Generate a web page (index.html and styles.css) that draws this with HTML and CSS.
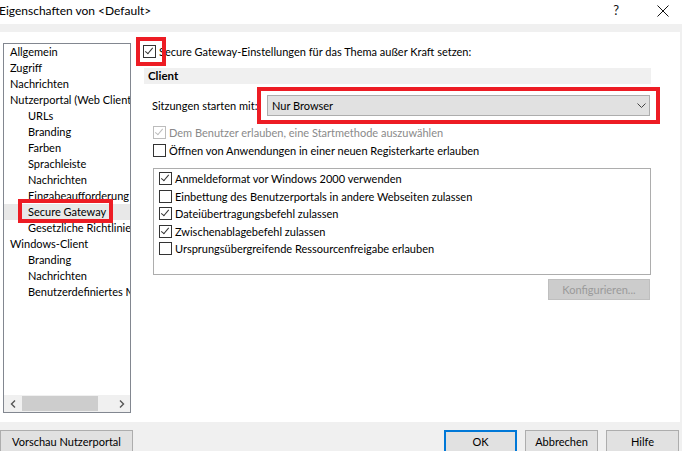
FILE: index.html
```html
<!DOCTYPE html>
<html lang="de">

<head>
    <meta charset="UTF-8" />
    <meta name="viewport" content="width=device-width, initial-scale=1.0" />
    <title>Eigenschaften von &lt;Default&gt;</title>

    <link rel="stylesheet" href="styles.css">
</head>

<body>
    <div class="titlebar">
        <span class="title">Eigenschaften von &lt;Default&gt;</span>
        <span class="tb-help">?</span>
        <svg class="tb-close" width="12" height="12" viewBox="0 0 12 12">
            <path d="M0.5 0.5 L11.5 11.5 M11.5 0.5 L0.5 11.5" stroke="#111" stroke-width="1" fill="none" />
        </svg>
    </div>

    <div class="window">
        <!-- Baum links -->
        <div class="tree">
            <ul>
                <li>Allgemein</li>
                <li>Zugriff</li>
                <li>Nachrichten</li>
                <li>Nutzerportal (Web Client)</li>
                <li class="sub">URLs</li>
                <li class="sub">Branding</li>
                <li class="sub">Farben</li>
                <li class="sub">Sprachleiste</li>
                <li class="sub">Nachrichten</li>
                <li class="sub">Eingabeaufforderung</li>
                <li class="sub selected">Secure Gateway<span class="mark mark-tree"></span></li>
                <li class="sub">Gesetzliche Richtlinien</li>
                <li>Windows-Client</li>
                <li class="sub">Branding</li>
                <li class="sub">Nachrichten</li>
                <li class="sub">Benutzerdefiniertes Menü</li>
            </ul>
            <div class="hscroll">
                <span class="arrow">
                    <svg width="6" height="8" viewBox="0 0 6 8"><polyline points="5,0.5 1.5,4 5,7.5" stroke="#555" stroke-width="1.4" fill="none" /></svg>
                </span>
                <span class="thumb"></span>
                <span class="arrow arrow-right">
                    <svg width="6" height="8" viewBox="0 0 6 8"><polyline points="1,0.5 4.5,4 1,7.5" stroke="#555" stroke-width="1.4" fill="none" /></svg>
                </span>
            </div>
        </div>

        <!-- Einstellungen rechts -->
        <div class="settings">
            <label class="check-row main-row">
                <span class="cb checked"><span class="mark mark-cb"></span></span>
                <span>Secure Gateway-Einstellungen für das Thema außer Kraft setzen:</span>
            </label>

            <div class="section-head">Client</div>

            <div class="select-row">
                <span class="select-label">Sitzungen starten mit:</span>
                <div class="select">
                    <span>Nur Browser</span>
                    <svg width="9" height="5" viewBox="0 0 9 5"><polyline points="0.5,0.5 4.5,4.5 8.5,0.5" stroke="#444" stroke-width="1" fill="none" /></svg>
                    <span class="mark mark-select"></span>
                </div>
            </div>

            <label class="check-row indent disabled">
                <span class="cb checked"></span>
                <span>Dem Benutzer erlauben, eine Startmethode auszuwählen</span>
            </label>
            <label class="check-row indent">
                <span class="cb"></span>
                <span>Öffnen von Anwendungen in einer neuen Registerkarte erlauben</span>
            </label>

            <div class="group">
                <label class="check-row"><span class="cb checked"></span><span>Anmeldeformat vor Windows 2000 verwenden</span></label>
                <label class="check-row"><span class="cb"></span><span>Einbettung des Benutzerportals in andere Webseiten zulassen</span></label>
                <label class="check-row"><span class="cb checked"></span><span>Dateiübertragungsbefehl zulassen</span></label>
                <label class="check-row"><span class="cb checked"></span><span>Zwischenablagebefehl zulassen</span></label>
                <label class="check-row"><span class="cb"></span><span>Ursprungsübergreifende Ressourcenfreigabe erlauben</span></label>
            </div>

            <button class="btn btn-config" disabled>Konfigurieren...</button>
        </div>
    </div>

    <footer>
        <button class="btn btn-preview">Vorschau Nutzerportal</button>
        <div class="footer-right">
            <button class="btn btn-ok">OK</button>
            <button class="btn">Abbrechen</button>
            <button class="btn">Hilfe</button>
        </div>
    </footer>
</body>

</html>
```

FILE: styles.css
```css
:root {
    --bg-gray: #f0f0f0;
    --border: #adadad;
    --border-tree: #828790;
    --btn-bg: #e1e1e1;
    --text: #000000;
    --text-disabled: #8a8a8a;
    --mark: #ed1c24;
    --blue: #0078d7;
}

body {
    margin: 0;
    width: 682px;
    height: 451px;
    overflow: hidden;
    background-color: var(--bg-gray);
    color: var(--text);
    font-family: Lato, "Noto Sans", sans-serif;
    font-size: 11px;
}

.titlebar {
    height: 24px;
    background-color: #ffffff;
    display: flex;
    align-items: center;
    font-size: 12px;

    .title {
        margin-left: -1px;
        margin-top: -4px;
    }

    .tb-help {
        margin-left: auto;
        margin-top: -4px;
        font-size: 13px;
        color: #111;
    }

    .tb-close {
        margin: -3px 13px 0 38px;
    }
}

.window {
    height: 390px;
    margin-top: 8px;
    margin-right: 2px;
    background-color: #ffffff;
    display: flex;
    align-items: flex-start;
}

/* Baum */
.tree {
    box-sizing: border-box;
    width: 128px;
    height: 370px;
    margin: 11px 0 0 3px;
    border: 1px solid var(--border-tree);
    display: flex;
    flex-direction: column;

    ul {
        list-style: none;
        margin: 0;
        padding: 0;
        flex: 1;
        overflow: hidden;
    }

    li {
        position: relative;
        height: 16px;
        line-height: 16px;
        padding-left: 6px;
        white-space: nowrap;
    }

    li.sub {
        padding-left: 24px;
    }

    li.selected {
        background-color: #e8e8e8;
    }
}

.hscroll {
    height: 17px;
    background-color: var(--bg-gray);
    display: flex;
    align-items: center;

    .arrow {
        width: 17px;
        height: 17px;
        display: flex;
        align-items: center;
        justify-content: center;
    }

    .thumb {
        width: 76px;
        height: 15px;
        margin-left: 1px;
        background-color: #cdcdcd;
    }

    .arrow-right {
        margin-left: auto;
    }
}

/* rote Markierungen */
.mark {
    position: absolute;
    box-sizing: border-box;
    border: 4px solid var(--mark);
    pointer-events: none;
}

.mark-tree {
    left: 14px;
    top: -5px;
    width: 95px;
    height: 24px;
}

.mark-cb {
    left: -8px;
    top: -9px;
    width: 30px;
    height: 29px;
}

.mark-select {
    left: -11px;
    top: -9px;
    width: 403px;
    height: 37px;
}

/* Einstellungen */
.settings {
    width: 508px;
    margin-left: 12px;
    display: flex;
    flex-direction: column;
}

.check-row {
    display: flex;
    align-items: center;
    gap: 3px;
    height: 16px;
    white-space: nowrap;
}

.cb {
    position: relative;
    box-sizing: border-box;
    flex: none;
    width: 13px;
    height: 13px;
    border: 1px solid #333333;
    background-color: #ffffff;
}

.cb.checked::before {
    content: "";
    position: absolute;
    left: 3px;
    top: 0px;
    width: 3px;
    height: 7px;
    border-right: 1px solid #333333;
    border-bottom: 1px solid #333333;
    transform: rotate(40deg);
}

.main-row {
    margin-top: 11px;
}

.section-head {
    height: 16px;
    line-height: 16px;
    margin: 9px 0 0 1px;
    width: 503px;
    padding-left: 4px;
    background-color: var(--bg-gray);
    font-weight: bold;
    font-size: 11.5px;
}

.select-row {
    display: flex;
    align-items: center;
    margin-top: 11px;
    padding-left: 9px;

    .select-label {
        width: 115px;
        white-space: nowrap;
    }
}

.select {
    position: relative;
    box-sizing: border-box;
    width: 383px;
    height: 21px;
    padding: 0 3px 0 4px;
    border: 1px solid var(--border);
    background-color: var(--btn-bg);
    display: flex;
    align-items: center;
    justify-content: space-between;
}

.indent {
    margin-left: 10px;
}

.disabled {
    margin-top: 8px;
    color: var(--text-disabled);

    .cb {
        border-color: #bcbcbc;
    }

    .cb.checked::before {
        border-color: #bcbcbc;
    }
}

.disabled + .check-row {
    margin-top: 2px;
}

.group {
    box-sizing: border-box;
    width: 498px;
    height: 107px;
    margin: 10px 0 0 10px;
    padding: 1px 0 0 5px;
    border: 1px solid var(--border);

    .check-row {
        height: 17.5px;
    }
}

/* Buttons */
.btn {
    box-sizing: border-box;
    height: 23px;
    padding: 0;
    border: 1px solid var(--border);
    background-color: var(--btn-bg);
    font-family: inherit;
    font-size: 11px;
    color: var(--text);
}

.btn-config {
    align-self: flex-end;
    width: 102px;
    height: 21px;
    margin: 4px 1px 0 0;
    background-color: #cccccc;
    border-color: #bfbfbf;
    color: #9a9a9a;
}

footer {
    display: flex;
    padding-top: 8px;

    .btn-preview {
        width: 133px;
    }

    .footer-right {
        margin-left: auto;
        margin-right: 3px;
        display: flex;
        gap: 8px;
    }

    .footer-right .btn {
        width: 73px;
    }

    .btn-ok {
        border: 2px solid var(--blue);
    }
}
```
